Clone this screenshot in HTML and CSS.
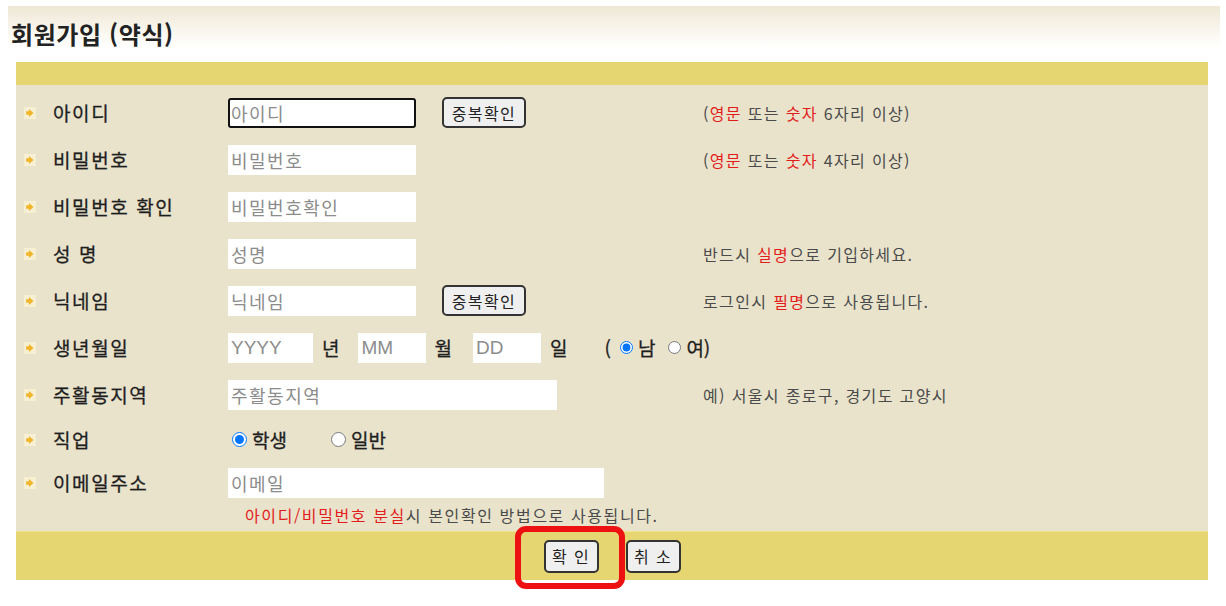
FILE: index.html
```html
<!DOCTYPE html>
<html lang="ko">
<head>
<meta charset="utf-8">
<title>회원가입 (약식)</title>
<link rel="stylesheet" href="styles.css">
</head>
<body>
<div class="head">
  <h1 class="title">회원가입 (약식)</h1>
</div>
<div class="board">
  <div class="topbar"></div>
  <div class="rows">
    <div class="row">
      <div class="label"><svg class="ico" viewBox="0 0 12 12"><rect width="12" height="12" fill="#f6efd2"/><path d="M5 2 L9.5 6 L5 10 L5 7.7 L2.2 7.7 L2.2 4.3 L5 4.3 Z" fill="#f2b428"/></svg>아이디</div>
      <div class="field"><input class="inp focused" placeholder="아이디"><button class="btn dup">중복확인</button></div>
      <div class="hint">(<em>영문</em> 또는 <em>숫자</em> 6자리 이상)</div>
    </div>
    <div class="row">
      <div class="label"><svg class="ico" viewBox="0 0 12 12"><rect width="12" height="12" fill="#f6efd2"/><path d="M5 2 L9.5 6 L5 10 L5 7.7 L2.2 7.7 L2.2 4.3 L5 4.3 Z" fill="#f2b428"/></svg>비밀번호</div>
      <div class="field"><input class="inp" placeholder="비밀번호"></div>
      <div class="hint">(<em>영문</em> 또는 <em>숫자</em> 4자리 이상)</div>
    </div>
    <div class="row">
      <div class="label"><svg class="ico" viewBox="0 0 12 12"><rect width="12" height="12" fill="#f6efd2"/><path d="M5 2 L9.5 6 L5 10 L5 7.7 L2.2 7.7 L2.2 4.3 L5 4.3 Z" fill="#f2b428"/></svg>비밀번호 확인</div>
      <div class="field"><input class="inp" placeholder="비밀번호확인"></div>
    </div>
    <div class="row">
      <div class="label"><svg class="ico" viewBox="0 0 12 12"><rect width="12" height="12" fill="#f6efd2"/><path d="M5 2 L9.5 6 L5 10 L5 7.7 L2.2 7.7 L2.2 4.3 L5 4.3 Z" fill="#f2b428"/></svg>성 명</div>
      <div class="field"><input class="inp" placeholder="성명"></div>
      <div class="hint">반드시 <em>실명</em>으로 기입하세요.</div>
    </div>
    <div class="row">
      <div class="label"><svg class="ico" viewBox="0 0 12 12"><rect width="12" height="12" fill="#f6efd2"/><path d="M5 2 L9.5 6 L5 10 L5 7.7 L2.2 7.7 L2.2 4.3 L5 4.3 Z" fill="#f2b428"/></svg>닉네임</div>
      <div class="field"><input class="inp" placeholder="닉네임"><button class="btn dup">중복확인</button></div>
      <div class="hint">로그인시 <em>필명</em>으로 사용됩니다.</div>
    </div>
    <div class="row">
      <div class="label"><svg class="ico" viewBox="0 0 12 12"><rect width="12" height="12" fill="#f6efd2"/><path d="M5 2 L9.5 6 L5 10 L5 7.7 L2.2 7.7 L2.2 4.3 L5 4.3 Z" fill="#f2b428"/></svg>생년월일</div>
      <div class="field birth">
        <input class="inp yy" placeholder="YYYY"><span class="unit u-y">년</span>
        <input class="inp md" placeholder="MM"><span class="unit u-m">월</span>
        <input class="inp md" placeholder="DD"><span class="unit u-d">일</span>
        <span class="paren">(</span><input type="radio" name="sex" class="rad" checked><span class="opt">남</span><input type="radio" name="sex" class="rad rad2"><span class="opt">여)</span>
      </div>
    </div>
    <div class="row">
      <div class="label"><svg class="ico" viewBox="0 0 12 12"><rect width="12" height="12" fill="#f6efd2"/><path d="M5 2 L9.5 6 L5 10 L5 7.7 L2.2 7.7 L2.2 4.3 L5 4.3 Z" fill="#f2b428"/></svg>주활동지역</div>
      <div class="field"><input class="inp area" placeholder="주활동지역"></div>
      <div class="hint">예) 서울시 종로구, 경기도 고양시</div>
    </div>
    <div class="row short">
      <div class="label"><svg class="ico" viewBox="0 0 12 12"><rect width="12" height="12" fill="#f6efd2"/><path d="M5 2 L9.5 6 L5 10 L5 7.7 L2.2 7.7 L2.2 4.3 L5 4.3 Z" fill="#f2b428"/></svg>직업</div>
      <div class="field job"><input type="radio" name="job" class="rad" checked><span class="opt">학생</span><input type="radio" name="job" class="rad rad3"><span class="opt">일반</span></div>
    </div>
    <div class="row short">
      <div class="label"><svg class="ico" viewBox="0 0 12 12"><rect width="12" height="12" fill="#f6efd2"/><path d="M5 2 L9.5 6 L5 10 L5 7.7 L2.2 7.7 L2.2 4.3 L5 4.3 Z" fill="#f2b428"/></svg>이메일주소</div>
      <div class="field"><input class="inp mail" placeholder="이메일"></div>
    </div>
    <div class="note"><em>아이디/비밀번호 분실</em>시 본인확인 방법으로 사용됩니다.</div>
  </div>
  <div class="foot">
    <div class="okwrap"><button class="btn fbtn">확 인</button><span class="mark"></span></div>
    <button class="btn fbtn">취 소</button>
  </div>
</div>
</body>
</html>
```
FILE: styles.css
```css
* { box-sizing: border-box; }
html, body { min-height: 606px; }
body {
  margin: 0;
  background: #fff;
  font-family: "Noto Sans CJK KR", "Noto Sans", sans-serif;
  color: #2b2b2b;
}
.head {
  margin: 6px 6px 0 8px;
  height: 56px;
  background: linear-gradient(to bottom, #eee7d4 0%, #f8f5ec 40%, #ffffff 75%);
}
.title {
  margin: 0;
  padding: 14px 0 0 3px;
  font-size: 24px;
  line-height: 28px;
  letter-spacing: 0.6px;
  font-weight: 700;
  color: #222;
}
.board {
  margin-left: 16px;
  width: 1192px;
}
.topbar {
  height: 23px;
  background: #e6d672;
}
.rows {
  background: #e9e3cc;
  padding-top: 4px;
  height: 446px;
}
.row {
  display: flex;
  align-items: center;
  height: 47px;
}
.row.short { height: 43px; }
.label {
  width: 212px;
  display: flex;
  align-items: center;
  padding-left: 8px;
  font-size: 19px;
  letter-spacing: 1.6px;
  font-weight: 400;
  color: #1e1e1e;
  white-space: pre;
  -webkit-text-stroke: 0.3px #1e1e1e;
}
.ico {
  width: 12px;
  height: 12px;
  margin-right: 17px;
  flex: none;
}
.field {
  width: 475px;
  display: flex;
  align-items: center;
}
.inp {
  width: 188px;
  height: 30px;
  border: 1px solid #fff;
  background: #fff;
  padding: 0 0 0 2px;
  font-family: "Noto Sans CJK KR", "Liberation Sans", sans-serif;
  font-size: 18px;
  letter-spacing: 1.5px;
  color: #333;
  outline: none;
}
.inp::placeholder { color: #8c8c8c; }
.inp.focused {
  border: 2px solid #111;
  border-radius: 3px;
  padding-left: 1px;
}
.inp.yy { width: 85px; font-family: "Liberation Sans", sans-serif; font-size: 19px; letter-spacing: 0; }
.inp.md { width: 68px; font-family: "Liberation Sans", sans-serif; font-size: 19px; letter-spacing: 0; }
.inp.area { width: 329px; }
.inp.mail { width: 376px; }
.btn {
  font-family: "Noto Sans CJK KR", sans-serif;
  font-size: 16px;
  color: #222;
  background: #efefef;
  border: 2px solid #333;
  border-radius: 5px;
  padding: 0;
  height: 31px;
  letter-spacing: 1.4px;
}
.dup { width: 84px; margin-left: 26px; }
.hint {
  font-size: 16px;
  letter-spacing: 1.35px;
  color: #4a4a4a;
}
em { font-style: normal; color: #e21b1b; }
.unit {
  font-size: 19px;
  color: #1e1e1e;
  -webkit-text-stroke: 0.3px #1e1e1e;
}
.u-y { margin: 0 19px 0 9px; }
.u-m { margin: 0 21px 0 8px; }
.u-d { margin: 0 37px 0 9px; }
.paren, .opt {
  font-size: 19px;
  color: #1e1e1e;
  -webkit-text-stroke: 0.3px #1e1e1e;
}
.rad {
  margin: 0 5px 0 0;
  width: 15px;
  height: 15px;
}
.birth .rad { margin-left: 9px; }
.birth .rad2 { margin-left: 13px; }
.job .rad { margin-left: 4px; }
.job .rad3 { margin-left: 44px; }
.note {
  height: 30px;
  display: flex;
  align-items: center;
  padding: 0 0 9px 229px;
  font-size: 16px;
  letter-spacing: 1.6px;
  color: #4a4a4a;
}
.foot {
  height: 49px;
  background: #e6d672;
  border-top: 1px solid #ede38f;
  display: flex;
  justify-content: center;
  align-items: center;
  gap: 27px;
}
.fbtn { width: 55px; height: 33px; }
.okwrap { position: relative; display: flex; }
.mark {
  position: absolute;
  left: -29px;
  top: -14px;
  width: 110px;
  height: 63px;
  border: 6px solid #ee1111;
  border-radius: 11px;
  pointer-events: none;
}
```
